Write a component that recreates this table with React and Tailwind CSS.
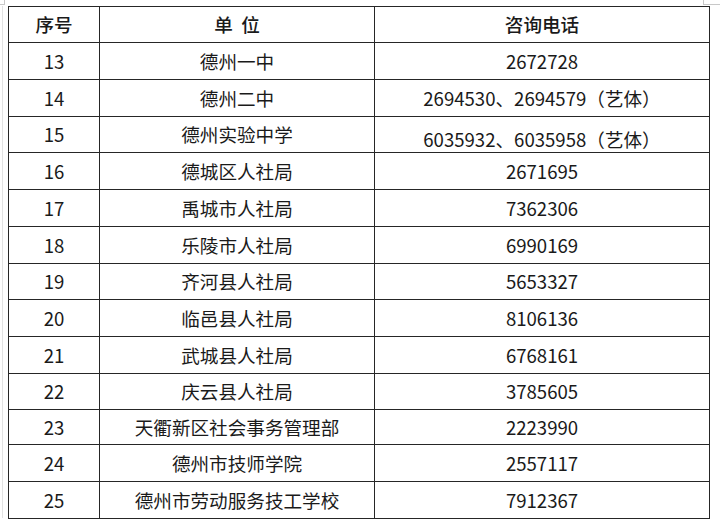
import React from 'react';

const rows = [
    { no: '13', unit: '德州一中', phone: '2672728', h: 'h-[37px]' },
    { no: '14', unit: '德州二中', phone: '2694530、2694579（艺体）', h: 'h-[37px]' },
    { no: '15', unit: '德州实验中学', phone: '6035932、6035958（艺体）', h: 'h-[36px]', low: true },
    { no: '16', unit: '德城区人社局', phone: '2671695', h: 'h-[37px]' },
    { no: '17', unit: '禹城市人社局', phone: '7362306', h: 'h-[37px]' },
    { no: '18', unit: '乐陵市人社局', phone: '6990169', h: 'h-[37px]' },
    { no: '19', unit: '齐河县人社局', phone: '5653327', h: 'h-[36px]' },
    { no: '20', unit: '临邑县人社局', phone: '8106136', h: 'h-[37px]' },
    { no: '21', unit: '武城县人社局', phone: '6768161', h: 'h-[37px]' },
    { no: '22', unit: '庆云县人社局', phone: '3785605', h: 'h-[36px]' },
    { no: '23', unit: '天衢新区社会事务管理部', phone: '2223990', h: 'h-[35px]' },
    { no: '24', unit: '德州市技师学院', phone: '2557117', h: 'h-[37px]' },
    { no: '25', unit: '德州市劳动服务技工学校', phone: '7912367', h: 'h-[37px]' },
];

const cell = 'border border-[#262626] text-center align-middle p-0 leading-none';

export default function App() {
    return (
        <div
            className="relative w-[720px] h-[523px] bg-white text-[#1a1a1a] text-[18.6px] overflow-hidden"
            style={{ fontFamily: '"Noto Sans CJK SC", sans-serif' }}
        >
            {/* page margin marks */}
            <div className="absolute left-0 top-0 w-[5px] h-[5px] border-r border-b border-[#c8c8c8]" />
            <div className="absolute left-[703px] top-0 w-[17px] h-[5px] border-l border-b border-[#c8c8c8]" />
            <div className="absolute left-[2px] top-[6px] w-px h-[512px] bg-[#e2e2e2]" />

            <div className="pt-[6px] pl-[8px]">
                <table className="table-fixed border-collapse w-[701px]">
                    <colgroup>
                        <col className="w-[91px]" />
                        <col className="w-[275px]" />
                        <col className="w-[335px]" />
                    </colgroup>
                    <thead>
                        <tr className="h-[36px]">
                            <th className={`${cell} font-medium`}>序号</th>
                            <th className={`${cell} font-medium whitespace-pre`}>单  位</th>
                            <th className={`${cell} font-medium`}>咨询电话</th>
                        </tr>
                    </thead>
                    <tbody>
                        {rows.map((r) => (
                            <tr key={r.no} className={r.h}>
                                <td className={cell}>{r.no}</td>
                                <td className={cell}>{r.unit}</td>
                                <td className={`${cell} ${r.low ? 'pt-[9px]' : ''}`}>{r.phone}</td>
                            </tr>
                        ))}
                    </tbody>
                </table>
            </div>
        </div>
    );
}
